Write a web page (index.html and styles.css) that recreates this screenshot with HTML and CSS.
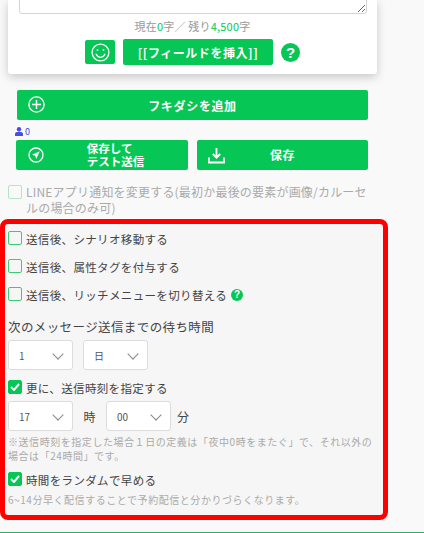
FILE: index.html
```html
<!DOCTYPE html>
<html lang="ja">
<head>
<meta charset="utf-8">
<title>メッセージ設定</title>
<link rel="stylesheet" href="styles.css">
</head>
<body>
<div class="page">
  <section class="card">
    <textarea class="textarea" aria-label="本文"></textarea>
    <p class="counter">現在<b>0</b>字／ 残り<b>4,500</b>字</p>
    <div class="tools">
      <button class="btn emoji" aria-label="絵文字">
        <svg width="19" height="19" viewBox="0 0 19 19" fill="none" stroke="#fff" stroke-width="1.3"><circle cx="9.5" cy="9.5" r="8.4"/><path d="M5.2 11.2c1 2.2 2.6 3.1 4.3 3.1s3.3-.9 4.3-3.1" stroke-linecap="round"/><circle cx="6.5" cy="7" r=".9" fill="#fff" stroke="none"/><circle cx="12.5" cy="7" r=".9" fill="#fff" stroke="none"/></svg>
      </button>
      <button class="btn field">[[フィールドを挿入]]</button>
      <span class="help big">?</span>
    </div>
  </section>

  <button class="btn add">
    <svg class="add-icon" width="17" height="17" viewBox="0 0 17 17" fill="none" stroke="#fff" stroke-width="1.4"><circle cx="8.5" cy="8.5" r="7.6"/><path d="M8.5 4v9M4 8.5h9"/></svg>
    フキダシを追加
  </button>

  <div class="count">
    <svg width="8" height="9" viewBox="0 0 8 9" fill="#4a4ae8"><circle cx="4" cy="2.3" r="2.2"/><path d="M0 9V7.2C0 5.6 1.5 4.8 4 4.8s4 .8 4 2.4V9z"/></svg>
    <span>0</span>
  </div>

  <div class="save-row">
    <button class="btn test">
      <svg class="save-icon" width="16" height="16" viewBox="0 0 16 16" fill="none" stroke="#fff" stroke-width="1.3"><circle cx="8" cy="8" r="7"/><path d="M4 7.8l7.8-3.6-3.6 7.8-1-3.2z" fill="#fff" stroke="none"/></svg>
      <span class="test-label">保存して<br>テスト送信</span>
    </button>
    <button class="btn save">
      <svg class="save-icon" width="17" height="17" viewBox="0 0 17 17" fill="none" stroke="#fff" stroke-width="1.8"><path d="M8.5 1v9.5M4.8 7l3.7 3.7L12.200 7M1 10.500V15.500h15v-5"/></svg>
      <span>保存</span>
    </button>
  </div>

  <label class="check-line disabled">
    <span class="box faint"></span>
    <span>LINEアプリ通知を変更する(最初か最後の要素が画像/カルーセルの場合のみ可)</span>
  </label>

  <section class="panel">
    <label class="check-line opt"><span class="box"></span><span>送信後、シナリオ移動する</span></label>
    <label class="check-line opt"><span class="box"></span><span>送信後、属性タグを付与する</span></label>
    <label class="check-line opt"><span class="box"></span><span>送信後、リッチメニューを切り替える</span><span class="help small">?</span></label>

    <h3 class="wait">次のメッセージ送信までの待ち時間</h3>
    <div class="selects">
      <div class="select">1<i class="chev"></i></div>
      <div class="select">日<i class="chev"></i></div>
    </div>

    <label class="check-line timed">
      <span class="box on"><svg width="10" height="8" viewBox="0 0 10 8" fill="none" stroke="#fff" stroke-width="2"><path d="M1 4l3 3 5-6"/></svg></span>
      <span>更に、送信時刻を指定する</span>
    </label>
    <div class="selects time">
      <div class="select">17<i class="chev"></i></div>
      <span class="unit">時</span>
      <div class="select">00<i class="chev"></i></div>
      <span class="unit">分</span>
    </div>
    <p class="note">※送信時刻を指定した場合１日の定義は「夜中0時をまたぐ」で、それ以外の場合は「24時間」です。</p>

    <label class="check-line random">
      <span class="box on"><svg width="10" height="8" viewBox="0 0 10 8" fill="none" stroke="#fff" stroke-width="2"><path d="M1 4l3 3 5-6"/></svg></span>
      <span>時間をランダムで早める</span>
    </label>
    <p class="note last">6~14分早く配信することで予約配信と分かりづらくなります。</p>
  </section>
</div>
<div class="foot-line"></div>
</body>
</html>
```
FILE: styles.css
```css
* { box-sizing: border-box; }
html, body { margin: 0; height: 100%; }
body {
  background: #f9f9f9;
  font-family: "Noto Sans CJK JP", "Noto Sans", sans-serif;
  color: #444;
  overflow: hidden;
  position: relative;
}
.page { width: 388px; display: flex; flex-direction: column; }
.btn {
  border: 0;
  border-radius: 2px;
  background: #06c755;
  color: #fff;
  font-family: inherit;
  font-weight: 700;
  padding: 0;
  display: flex;
  align-items: center;
  justify-content: center;
}
.card {
  margin-left: 8px;
  width: 369px;
  height: 74px;
  background: #fff;
  border-radius: 0 0 3px 3px;
  box-shadow: 0 3px 10px rgba(0,0,0,.2);
  display: flex;
  flex-direction: column;
  align-items: center;
}
.textarea {
  display: block;
  width: 348px;
  height: 24px;
  margin-top: -10px;
  flex: none;
  border: 1px solid #d4d4d4;
  border-radius: 3px;
  background: #fff;
}
.counter { margin: 4px 0 0; font-size: 11px; line-height: 16px; color: #999; letter-spacing: .2px; }
.counter b { color: #06c755; font-weight: 400; }
.tools { display: flex; align-items: center; margin-top: 5px; gap: 8px; }
.emoji { width: 30px; height: 24px; }
.field { width: 150px; height: 26px; font-size: 12px; letter-spacing: .55px; }
.help {
  border-radius: 50%;
  background: #06c755;
  color: #fff;
  font-weight: 700;
  display: inline-flex;
  align-items: center;
  justify-content: center;
  font-family: "Liberation Sans", sans-serif;
}
.help.big { width: 19px; height: 19px; font-size: 15px; }
.help.small { width: 12px; height: 12px; font-size: 10px; margin: 3px 0 0 0; }
.add {
  position: relative;
  margin: 16px 0 0 17px;
  width: 351px;
  height: 30px;
  font-size: 12px;
  letter-spacing: .6px;
}
.add-icon { position: absolute; left: 11px; top: 6px; }
.count {
  margin: 6px 0 0 15px;
  height: 10px;
  display: flex;
  align-items: center;
  gap: 2px;
  font-size: 9px;
  color: #4a4ae8;
}
.save-row { display: flex; gap: 9px; margin: 4px 0 0 16px; }
.test, .save {
  position: relative;
  height: 30px;
  font-size: 12px;
  line-height: 12px;
  letter-spacing: .5px;
  text-align: left;
}
.test { width: 172px; }
.save { width: 171px; }
.test .save-icon { position: absolute; left: 12px; top: 7px; }
.save .save-icon { position: absolute; left: 11px; top: 7px; }
.test-label { margin-left: 27px; font-size: 11.5px; letter-spacing: 0; line-height: 13px; }
.check-line { display: flex; align-items: flex-start; gap: 4px; font-size: 11.5px; line-height: 18px; letter-spacing: .35px; }
.box {
  flex: none;
  width: 14px;
  height: 14px;
  border: 1.5px solid #3ecb73;
  border-radius: 2px;
  margin-top: 1px;
  display: flex;
  align-items: center;
  justify-content: center;
}
.box.faint { border-color: #b2e7c6; }
.box.on { background: #06c755; border-color: #06c755; }
.disabled { margin: 14px 20px 0 8px; color: #aaa; font-size: 12px; letter-spacing: .2px; line-height: 16px; }
.panel {
  margin-top: 3px;
  width: 388px;
  height: 301px;
  border: 5px solid #f00;
  border-radius: 8px;
  padding: 6px 3px 0;
  background: #f6f6f6;
  display: flex;
  flex-direction: column;
}
.opt { height: 28px; }
.wait { margin: 3px 0 0; font-size: 12.5px; line-height: 20px; font-weight: 400; letter-spacing: .4px; color: #444; }
.selects { display: flex; align-items: center; gap: 10px; margin-top: 3px; }
.select {
  width: 65px;
  height: 30px;
  background: #fff;
  border: 1px solid #dcdcdc;
  border-radius: 3px;
  padding-left: 10px;
  display: flex;
  align-items: center;
  font-size: 10px;
  position: relative;
  color: #555;
}
.chev {
  position: absolute;
  right: 10px;
  top: 9px;
  width: 8px;
  height: 8px;
  border-right: 1.5px solid #888;
  border-bottom: 1.5px solid #888;
  transform: rotate(45deg);
}
.timed { margin-top: 9px; }
.time { gap: 0; margin-top: 4px; }
.unit { font-size: 12px; width: 33px; text-align: center; }
.unit:last-child { width: 24px; }
.note { margin: 4px 0 0; font-size: 10px; line-height: 14px; color: #aaa; letter-spacing: .55px; }
.random { margin-top: 8px; }
.last { margin-top: 4px; }
.foot-line { position: absolute; left: 0; right: 0; top: 532px; height: 1px; background: #2bb56a; }
```
